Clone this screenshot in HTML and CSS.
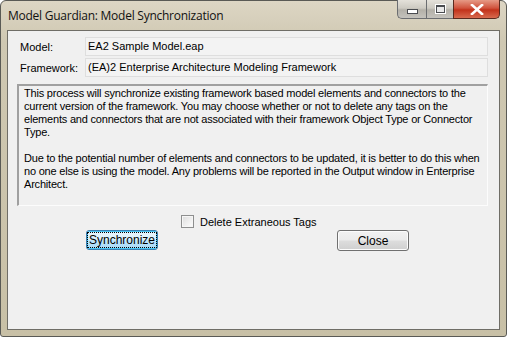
FILE: index.html
```html
<!DOCTYPE html>
<html lang="en">
<head>
    <meta charset="UTF-8">
    <title>Model Guardian: Model Synchronization</title>
    <link rel="stylesheet" href="styles.css">
</head>
<body>
    <div class="window">
        <div class="titlebar">
            <div class="title">Model Guardian: Model Synchronization</div>
            <div class="caption-buttons">
                <div class="cap-btn cap-min"><span class="min-glyph"></span></div>
                <div class="cap-btn cap-max"><span class="max-glyph"></span></div>
                <div class="cap-btn cap-close">
                    <svg width="14" height="11" viewBox="0 0 14 11">
                        <path d="M2 1 L12 10 M12 1 L2 10" stroke="#fff" stroke-width="2.6" stroke-linecap="square"/>
                    </svg>
                </div>
            </div>
        </div>

        <div class="client">
            <div class="field-row">
                <label class="field-label">Model:</label>
                <div class="field">EA2 Sample Model.eap</div>
            </div>
            <div class="field-row">
                <label class="field-label">Framework:</label>
                <div class="field">(EA)2 Enterprise Architecture Modeling Framework</div>
            </div>

            <div class="description">
                <p>This process will synchronize existing framework based model elements and connectors to the current version of the framework. You may choose whether or not to delete any tags on the elements and connectors that are not associated with their framework Object Type or Connector Type.</p>
                <p>Due to the potential number of elements and connectors to be updated, it is better to do this when no one else is using the model. Any problems will be reported in the Output window in Enterprise Architect.</p>
            </div>

            <div class="check-row">
                <span class="checkbox"></span>
                <span class="check-label">Delete Extraneous Tags</span>
            </div>

            <div class="button-row">
                <button class="btn btn-default"><span class="focus">Synchronize</span></button>
                <button class="btn">Close</button>
            </div>
        </div>
    </div>
</body>
</html>
```

FILE: styles.css
```css
html, body {
    margin: 0;
    padding: 0;
}
body {
    width: 507px;
    height: 337px;
    overflow: hidden;
    font-family: 'Liberation Sans', Arial, sans-serif;
    font-size: 11px;
    color: #000;
}
.window {
    box-sizing: border-box;
    width: 507px;
    height: 337px;
    border: 1px solid #5a5a55;
    border-radius: 6px 6px 3px 3px;
    background: linear-gradient(to bottom, #ddd6c4 0%, #cfc8b2 12%, #c8c0a6 100%);
    display: flex;
    flex-direction: column;
    padding: 0 6px 6px 6px;
}
.titlebar {
    height: 29px;
    display: flex;
    align-items: flex-start;
    justify-content: space-between;
}
.title {
    font-family: 'Open Sans', 'Liberation Sans', sans-serif;
    font-size: 12px;
    padding-top: 6px;
    padding-left: 1px;
    color: #111;
    letter-spacing: -0.25px;
}
.caption-buttons {
    display: flex;
    margin-top: -1px;
}
.cap-btn {
    height: 19px;
    display: flex;
    align-items: center;
    justify-content: center;
    border: 1px solid #6b6d70;
    border-top: none;
    box-sizing: border-box;
}
.cap-min {
    width: 29px;
    border-radius: 0 0 0 5px;
    border-right: none;
    background: linear-gradient(to bottom, #e4e1da 0%, #cdcac2 45%, #b3b0a8 55%, #c4c2bc 100%);
}
.cap-max {
    width: 27px;
    border-right: none;
    background: linear-gradient(to bottom, #e4e1da 0%, #cdcac2 45%, #b3b0a8 55%, #c4c2bc 100%);
}
.cap-close {
    width: 47px;
    border-radius: 0 0 5px 0;
    border-color: #5b2a1f;
    background: linear-gradient(to bottom, #e69a86 0%, #d0533d 45%, #c2321b 55%, #d86a4e 100%);
}
.min-glyph {
    display: block;
    width: 9px;
    height: 3px;
    margin-top: 5px;
    background: #fff;
    border: 1px solid #4a4c50;
}
.max-glyph {
    display: block;
    width: 7px;
    height: 5px;
    background: #e8e8e8;
    border: 1px solid #4a4c50;
    border-top-width: 2px;
    box-shadow: 0 0 0 1px #fff;
}
.client {
    flex: 1;
    background: #f0f0f0;
    border: 1px solid #6f6d66;
    padding: 6px 11px 0 11px;
}
.field-row {
    display: flex;
    align-items: center;
    margin-bottom: 2px;
}
.field-label {
    width: 65px;
    padding-left: 1px;
}
.field {
    flex: 1;
    height: 17px;
    line-height: 17px;
    border: 1px solid #dedede;
    background: #f3f3f3;
    padding-left: 2px;
}
.description {
    margin-top: 7px;
    margin-left: -2px;
    height: 118px;
    border-top: 2px solid #a0a0a0;
    border-left: 2px solid #a0a0a0;
    border-right: 1px solid #fcfcfc;
    border-bottom: 1px solid #fcfcfc;
    padding: 1px 3px 0 5px;
    line-height: 13px;
}
.description p {
    margin: 0 0 13px 0;
    letter-spacing: -0.2px;
}
.check-row {
    display: flex;
    align-items: center;
    margin-top: 9px;
    padding-left: 162px;
    height: 13px;
}
.checkbox {
    width: 11px;
    height: 11px;
    border: 1px solid #8e8f8f;
    background: linear-gradient(135deg, #dcdcdc 0%, #f4f4f4 70%, #fdfdfd 100%);
    box-shadow: inset 0 0 0 1px #f6f6f6;
    margin-right: 6px;
}
.button-row {
    display: flex;
    margin-top: 2px;
    padding-left: 67px;
    gap: 179px;
}
.btn {
    width: 72px;
    height: 21px;
    padding: 0;
    font-family: 'Liberation Sans', Arial, sans-serif;
    font-size: 12px;
    color: #000;
    border: 1px solid #707070;
    border-radius: 3px;
    background: linear-gradient(to bottom, #f2f2f2 0%, #ebebeb 48%, #dddddd 52%, #cfcfcf 100%);
    box-shadow: inset 0 0 0 1px #fcfcfc;
}
.btn-default {
    height: 20px;
    border-color: #3c7fb1;
    box-shadow: inset 0 0 0 1px #48c6f5;
    background: linear-gradient(to bottom, #eaf6fd 0%, #d9f0fc 48%, #bee6fd 52%, #a7d9f5 100%);
}
.focus {
    display: inline-block;
    border: 1px dotted #000;
    padding: 0 1px;
    line-height: 14px;
}
```
